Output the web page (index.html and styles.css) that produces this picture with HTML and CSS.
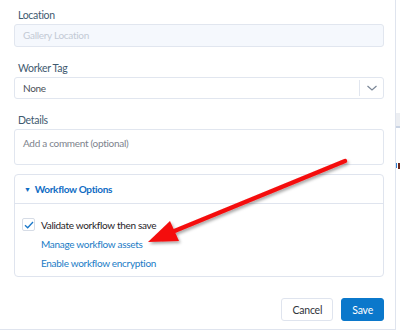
FILE: index.html
```html
<!DOCTYPE html>
<html lang="en">

<head>
    <meta charset="UTF-8">
    <meta name="viewport" content="width=device-width, initial-scale=1.0">
    <title>Save workflow</title>
    <link rel="stylesheet" href="styles.css">
</head>

<body>
    <div class="page">
        <div class="dialog">
            <div class="field">
                <label class="label">Location</label>
                <div class="input disabled">Gallery Location</div>
            </div>
            <div class="field">
                <label class="label">Worker Tag</label>
                <div class="input select">
                    <span class="value">None</span>
                    <span class="caret">
                        <svg width="12" height="8" viewBox="0 0 12 8">
                            <path d="M1.5 2 L6 6 L10.5 2" fill="none" stroke="#7b8797" stroke-width="1.2" />
                        </svg>
                    </span>
                </div>
            </div>
            <div class="field last">
                <label class="label">Details</label>
                <div class="input textarea">Add a comment (optional)</div>
            </div>
            <div class="options">
                <div class="options-head"><span class="tri">&#9660;</span>Workflow Options</div>
                <div class="options-body">
                    <div class="check-row">
                        <span class="checkbox">
                            <svg width="10" height="8" viewBox="0 0 10 8">
                                <path d="M1 4.2 L3.7 6.8 L9 1" fill="none" stroke="#1b78c9" stroke-width="1.3" />
                            </svg>
                        </span>
                        <span>Validate workflow then save</span>
                    </div>
                    <a class="link">Manage workflow assets</a>
                    <a class="link">Enable workflow encryption</a>
                </div>
            </div>
            <div class="actions">
                <button class="btn">Cancel</button>
                <button class="btn primary">Save</button>
            </div>
        </div>
        <div class="side">
            <div class="side-bar"></div>
            <div class="side-marks"><i class="dot"></i><i class="mark"></i></div>
        </div>

        <!-- annotation arrow -->
        <svg class="arrow" width="400" height="331" viewBox="0 0 400 331">
            <defs>
                <filter id="shadow" x="-10%" y="-20%" width="130%" height="150%">
                    <feDropShadow dx="1.5" dy="2" stdDeviation="1.5" flood-color="#000" flood-opacity="0.35" />
                </filter>
            </defs>
            <g filter="url(#shadow)">
                <line x1="345" y1="161" x2="172" y2="232" stroke="#f40d0d" stroke-width="4.5" stroke-linecap="round" />
                <polygon points="148,242 170,221 179,241" fill="#f40d0d" />
            </g>
        </svg>
    </div>
</body>

</html>
```

FILE: styles.css
```css
* {
    margin: 0;
    padding: 0;
    box-sizing: border-box;
}

body {
    width: 400px;
    height: 331px;
    overflow: hidden;
    background: #ffffff;
    font-family: Lato, "Noto Sans", sans-serif;
    font-size: 10px;
    letter-spacing: -0.3px;
    color: #252a31;
}

.page {
    position: relative;
    display: flex;
    height: 331px;
}

.dialog {
    width: 396px;
    height: 330px;
    border-right: 1px solid #dfe4ee;
    border-bottom: 1px solid #dfe4ee;
    padding: 6px 11px 0 14px;
}

.field {
    margin-bottom: 12px;
}

.field.last {
    margin-bottom: 9px;
}

.label {
    display: block;
    padding-left: 4px;
    line-height: 18px;
    font-size: 10.5px;
    color: #3f5a70;
}

.input {
    height: 23px;
    border: 1px solid #e1e6ef;
    border-radius: 3px;
    padding: 0 8px;
    line-height: 21px;
    color: #4a4f57;
}

.disabled {
    background: #f5f8fd;
    color: #c3cad5;
}

.select {
    height: 22px;
    line-height: 20px;
    display: flex;
    justify-content: space-between;
    padding-right: 0;
}

.caret {
    width: 24px;
    display: flex;
    align-items: center;
    justify-content: center;
    border-left: 1px solid #e1e6ef;
    margin: 2px 0;
}

.textarea {
    height: 36px;
    padding-top: 3px;
    color: #7d838c;
}

.options {
    border: 1px solid #dfe4ee;
    border-radius: 4px;
    height: 103px;
}

.options-head {
    height: 29px;
    line-height: 28px;
    border-bottom: 1px solid #dfe4ee;
    padding-left: 9px;
    color: #0f6cc4;
    font-weight: 700;
}

.tri {
    font-size: 7px;
    vertical-align: 1px;
    margin-right: 4px;
}

.options-body {
    display: flex;
    flex-direction: column;
    gap: 7px;
    padding: 14px 0 0 7px;
}

.check-row {
    display: flex;
    align-items: center;
    gap: 6px;
    color: #1f2328;
}

.checkbox {
    width: 13px;
    height: 13px;
    border: 1px solid #d6dce6;
    border-radius: 2px;
    display: flex;
    align-items: center;
    justify-content: center;
}

.link {
    padding-left: 19px;
    color: #1a7cc6;
}

.actions {
    display: flex;
    justify-content: flex-end;
    gap: 8px;
    margin-top: 21px;
}

.btn {
    font-family: inherit;
    font-size: 10.5px;
    letter-spacing: -0.2px;
    height: 23px;
    border-radius: 3px;
    border: 1px solid #dfe4ee;
    background: #ffffff;
    color: #30343a;
    padding: 0 10px;
}

.primary {
    background: #0b78cb;
    border-color: #0b78cb;
    color: #ffffff;
    padding: 0 10px;
}

.side {
    flex: 1;
    display: flex;
    flex-direction: column;
}

.side-bar {
    margin-top: 113px;
    height: 15px;
    background: #eceef2;
    border-bottom: 2px solid #c9d3e3;
}

.side-marks {
    margin-top: 35px;
    display: flex;
    gap: 1px;
}

.dot {
    width: 1px;
    height: 5px;
    background: #2f7fd0;
}

.mark {
    width: 2px;
    height: 6px;
    background: #6b2a20;
}

.arrow {
    position: absolute;
    left: 0;
    top: 0;
    pointer-events: none;
}
```
